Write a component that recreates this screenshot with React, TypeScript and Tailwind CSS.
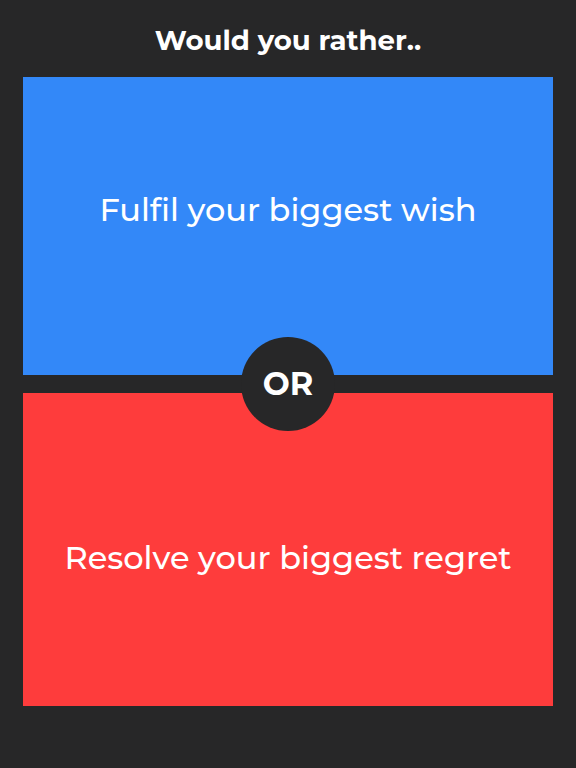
export default function App() {
  return (
    <div
      className="flex h-[768px] w-[576px] flex-col bg-[#272728] px-[23px]"
      style={{ fontFamily: '"Montserrat", "Inter", "Liberation Sans", sans-serif' }}
    >
      <h1 className="flex h-[77px] items-center justify-center pt-[4px] text-[27.6px] font-bold text-white">
        Would you rather..
      </h1>
      <div className="relative flex flex-col gap-[18px]">
        <button
          type="button"
          className="flex h-[298px] items-center justify-center bg-[#3388f8] pb-[32px] text-[32px] font-medium text-white"
        >
          Fulfil your biggest wish
        </button>
        <button
          type="button"
          className="flex h-[313px] items-center justify-center bg-[#fe3c3c] pt-[16px] text-[32px] font-medium text-white"
        >
          Resolve your biggest regret
        </button>
        <div className="absolute left-1/2 top-[260px] flex h-[94px] w-[94px] -translate-x-1/2 items-center justify-center rounded-full bg-[#272728] text-[32px] font-bold text-white">
          OR
        </div>
      </div>
    </div>
  );
}
